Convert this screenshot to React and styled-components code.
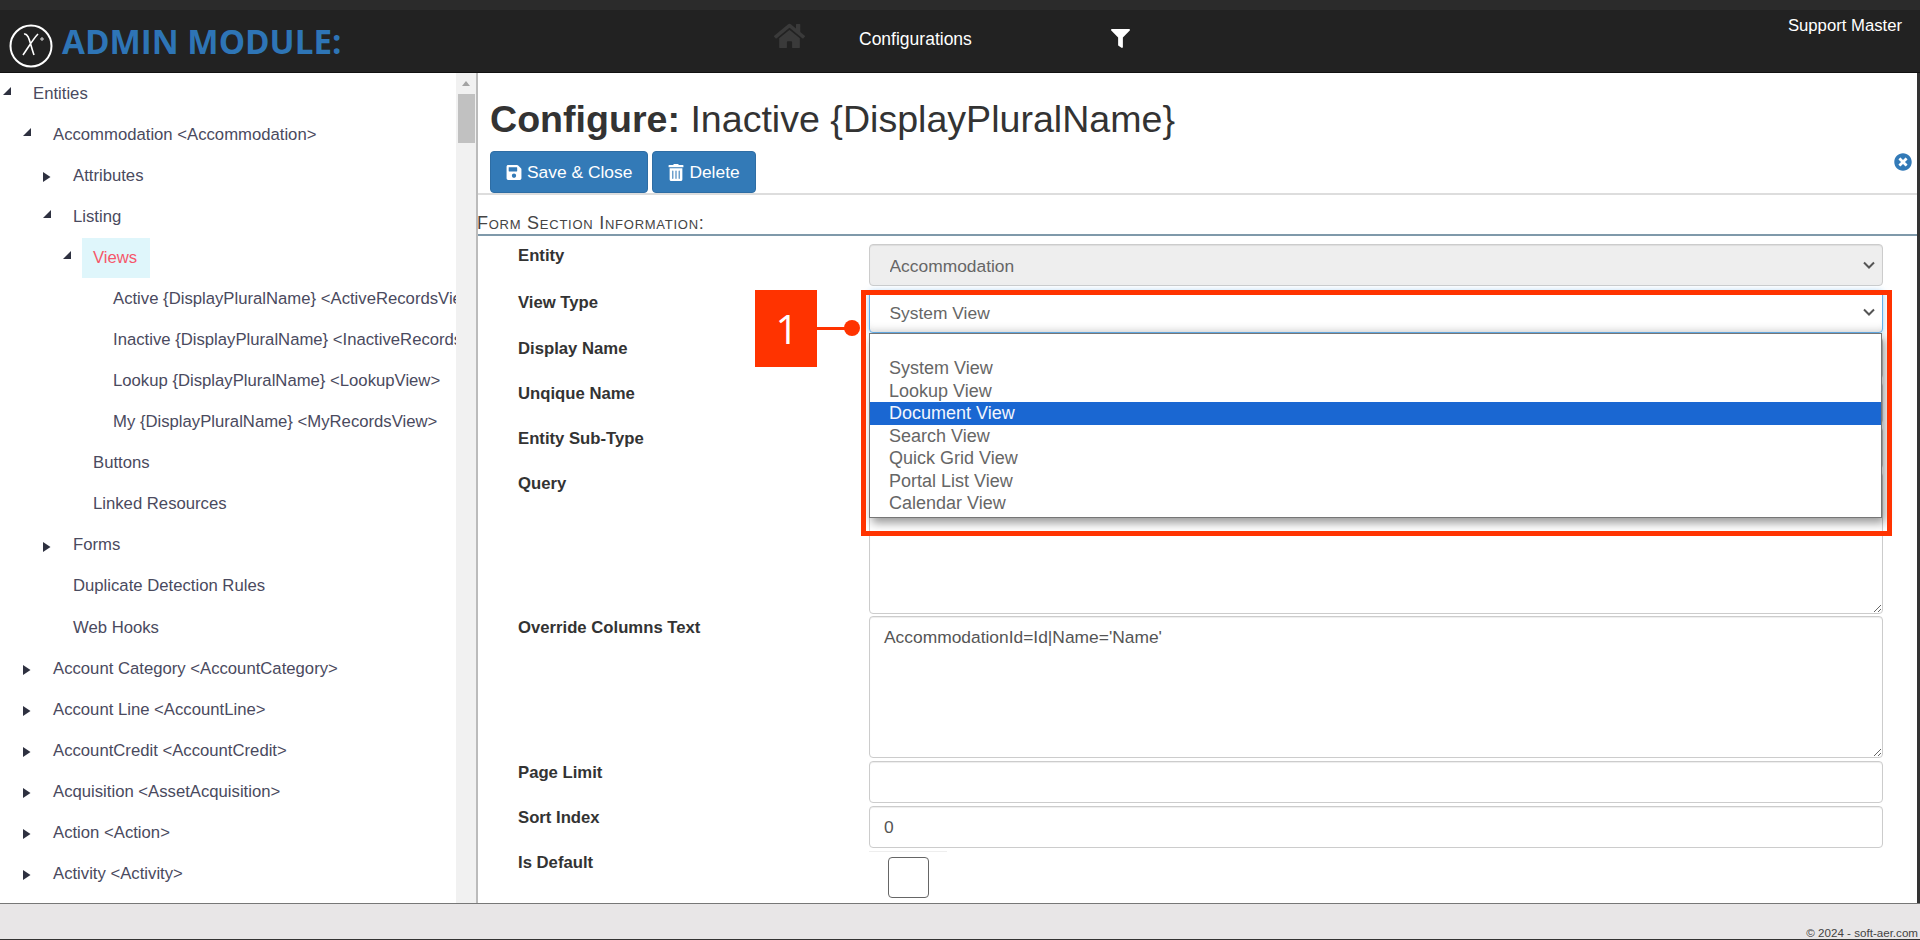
import React from 'react';
import styled, { createGlobalStyle } from 'styled-components';
import { FaFilter, FaHome, FaSave, FaTimesCircle, FaTrashAlt } from 'react-icons/fa';

const GlobalStyle = createGlobalStyle`
  html, body {
    margin: 0;
    height: 100%;
    overflow: hidden;
    background: #fff;
    font-family: "Liberation Sans", Arial, sans-serif;
  }
`;

const Page = styled.div`
  width: 1920px;
  height: 940px;
  display: flex;
  flex-direction: column;
  position: relative;
  overflow: hidden;
`;

const TopStrip = styled.div`
  height: 10px;
  background: #2b2b2b;
`;

const Header = styled.header`
  height: 62px;
  flex: none;
  display: flex;
  background: #222;
  border-bottom: 1px solid #111;
  color: #fff;
`;

const Brand = styled.div`
  width: 774px;
  flex: none;
  display: flex;
  align-items: center;
  gap: 9px;
  padding: 10px 0 0 9px;
  box-sizing: border-box;
`;

const BrandText = styled.span`
  font-family: "Open Sans", sans-serif;
  font-weight: 700;
  font-size: 33.2px;
  color: #2e75b6;
  white-space: nowrap;
  margin-bottom: 10px;
`;

const HomeIcon = styled(FaHome)`
  width: 31px;
  height: 28px;
  color: #3a3a3a;
  margin-top: 12px;
`;

const NavLink = styled.span`
  font-size: 17.5px;
  margin: 19px 0 0 54px;
  width: 252px;
`;

const FilterIcon = styled(FaFilter)`
  width: 19px;
  height: 19px;
  margin-top: 19px;
`;

const UserName = styled.span`
  margin-left: auto;
  padding: 6px 18px 0 0;
  font-size: 16.7px;
`;

const Body = styled.div`
  flex: 1;
  display: flex;
  min-height: 0;
`;

const Sidebar = styled.aside`
  width: 478px;
  flex: none;
  box-sizing: border-box;
  display: flex;
  border-right: 2px solid #bbb;
`;

const Tree = styled.ul`
  flex: 1;
  min-width: 0;
  list-style: none;
  margin: 0;
  padding: 0;
  overflow: hidden;
`;

const TreeRow = styled.li`
  height: 41.08px;
  display: flex;
  align-items: center;
  padding-left: ${(p) => p.$level * 20 + 33}px;
  position: relative;
  font-size: 16.7px;
  color: #4a4a5e;
  white-space: nowrap;
`;

const Toggle = styled.svg`
  position: absolute;
  left: ${(p) => p.$level * 20 + 2}px;
  top: ${(p) => (p.$open ? 13 : 17)}px;
  width: 10px;
  height: 10px;
  fill: #2e3140;
`;

const TreeLabel = styled.span`
  padding: ${(p) => (p.$active ? '10px 13px 10px 11px' : '0')};
  margin-left: ${(p) => (p.$active ? '-11px' : '0')};
  background: ${(p) => (p.$active ? '#dff6fb' : 'transparent')};
  color: ${(p) => (p.$active ? '#f6566a' : 'inherit')};
`;

const ScrollTrack = styled.div`
  width: 20px;
  flex: none;
  background: #f1f1f1;
  display: flex;
  flex-direction: column;
  align-items: center;
`;

const ScrollArrow = styled.div`
  margin-top: 8px;
  width: 0;
  height: 0;
  border-left: 4px solid transparent;
  border-right: 4px solid transparent;
  border-bottom: 5px solid #a3a3a3;
`;

const ScrollThumb = styled.div`
  width: 17px;
  height: 49px;
  margin-top: 8px;
  background: #c1c1c1;
`;

const Main = styled.main`
  flex: 1;
  min-width: 0;
  display: flex;
  flex-direction: column;
  border-right: 3px solid #333;
  overflow: hidden;
`;

const Title = styled.h1`
  margin: 0;
  padding: 26px 0 0 12px;
  height: 52px;
  font-size: 37.6px;
  line-height: 40px;
  font-weight: 400;
  color: #333;
  strong {
    font-weight: 700;
  }
`;

const Toolbar = styled.div`
  display: flex;
  align-items: flex-end;
  gap: 4px;
  height: 42px;
  padding-left: 12px;
  border-bottom: 2px solid #ddd;
  position: relative;
`;

const ActionButton = styled.button`
  height: 42px;
  display: flex;
  align-items: center;
  gap: 5px;
  padding: 0 15px;
  font: 17.4px "Liberation Sans", Arial, sans-serif;
  color: #fff;
  background: #337ab7;
  border: 1px solid #2e6da4;
  border-radius: 4px;
  svg {
    width: 16px;
    height: 17px;
  }
`;

const CloseIcon = styled(FaTimesCircle)`
  position: absolute;
  right: 5px;
  top: 2px;
  width: 18px;
  height: 18px;
  color: #337ab7;
`;

const SectionTitle = styled.div`
  height: 41px;
  box-sizing: border-box;
  padding-top: 18px;
  text-indent: -1px;
  font-size: 18px;
  letter-spacing: .75px;
  line-height: 20px;
  font-variant: small-caps;
  color: #444;
  border-bottom: 2px solid #7f99aa;
`;

const Form = styled.form`
  display: flex;
  flex-direction: column;
  padding: 8px 34px 0 40px;
`;

const FormRow = styled.div`
  display: grid;
  grid-template-columns: 351px 1fr;
  margin-bottom: ${(p) => p.$gap ?? 3}px;
`;

const Label = styled.label`
  font-size: 16.7px;
  font-weight: 700;
  line-height: 20px;
  color: #333;
  padding-top: 2px;
`;

const controlStyle = `
  width: 100%;
  box-sizing: border-box;
  border: 1px solid #ccc;
  border-radius: 4px;
  background: #fff;
  color: #555;
  font: 17.4px/22px "Liberation Sans", Arial, sans-serif;
  padding: 6px 14px;
  box-shadow: inset 0 1px 1px rgba(0, 0, 0, .075);
  outline: none;
  display: block;
`;

const chevron = "data:image/svg+xml,%3Csvg xmlns='http://www.w3.org/2000/svg' width='12' height='8'%3E%3Cpath d='M1 1.5l5 5 5-5' fill='none' stroke='%23555' stroke-width='2'/%3E%3C/svg%3E";

const Select = styled.select`
  ${controlStyle}
  height: 42px;
  padding: 7px 14px 5px 19.5px;
  appearance: none;
  color: #666;
  background: ${(p) => (p.disabled ? '#eee' : '#fff')} url("${chevron}") no-repeat right 7px center;
  opacity: 1;
  ${(p) => p.$focused && `
    border-color: #66afe9;
    box-shadow: inset 0 -10px 8px -8px rgba(0, 0, 0, .14), 0 0 6px rgba(102, 175, 233, .6);
  `}
`;

const Input = styled.input`
  ${controlStyle}
  height: 42px;
`;

const TextArea = styled.textarea`
  ${controlStyle}
  height: ${(p) => p.$height}px;
  padding-top: 9px;
  resize: vertical;
`;

const CheckboxCell = styled.div`
  width: 78px;
  height: 47px;
  padding-top: 5px;
  box-sizing: border-box;
  border-top: 1px solid #eee;
  display: flex;
  justify-content: center;
`;

const Checkbox = styled.div`
  width: 41px;
  height: 41px;
  box-sizing: border-box;
  border: 1px solid #666;
  border-radius: 4px;
  background: #fff;
`;

const Popup = styled.ul`
  position: absolute;
  left: 869px;
  top: 333px;
  width: 1013px;
  height: 185px;
  box-sizing: border-box;
  margin: 0;
  padding: 23px 0 0;
  list-style: none;
  background: #fff;
  border: 1px solid #767676;
  box-shadow: 3px 5px 9px rgba(0, 0, 0, .4);
  font-size: 18px;
  color: #666;
`;

const PopupOption = styled.li`
  height: 22.5px;
  line-height: 22.5px;
  padding-left: 19px;
  background: ${(p) => (p.$selected ? '#1a67d2' : 'transparent')};
  color: ${(p) => (p.$selected ? '#f2f6fd' : 'inherit')};
`;

const Callout = styled.div`
  position: absolute;
  left: 861px;
  top: 290px;
  width: 1031px;
  height: 246px;
  box-sizing: border-box;
  border: 5px solid #ff3300;
`;

const Badge = styled.div`
  position: absolute;
  left: 755px;
  top: 290px;
  width: 62px;
  height: 77px;
  padding-left: 2px;
  box-sizing: border-box;
  display: flex;
  align-items: center;
  justify-content: center;
  background: #ff3300;
  color: #fff;
  font: 40px "Open Sans", sans-serif;
`;

const Connector = styled.div`
  position: absolute;
  left: 817px;
  top: 327px;
  width: 30px;
  height: 3px;
  background: #ff3300;
  &::after {
    content: '';
    position: absolute;
    right: -13px;
    top: -7px;
    width: 16px;
    height: 16px;
    border-radius: 50%;
    background: #ff3300;
  }
`;

const Footer = styled.footer`
  height: 37px;
  flex: none;
  box-sizing: border-box;
  display: flex;
  align-items: flex-end;
  justify-content: flex-end;
  background: #e8e6e7;
  border-top: 1px solid #777;
  border-bottom: 1px solid #333;
  padding-right: 2px;
  font-size: 11.6px;
  line-height: 12px;
  color: #444;
`;

const treeItems = [
  { level: 0, label: 'Entities', toggle: 'open' },
  { level: 1, label: 'Accommodation <Accommodation>', toggle: 'open' },
  { level: 2, label: 'Attributes', toggle: 'closed' },
  { level: 2, label: 'Listing', toggle: 'open' },
  { level: 3, label: 'Views', toggle: 'open', active: true },
  { level: 4, label: 'Active {DisplayPluralName} <ActiveRecordsView>' },
  { level: 4, label: 'Inactive {DisplayPluralName} <InactiveRecordsView>' },
  { level: 4, label: 'Lookup {DisplayPluralName} <LookupView>' },
  { level: 4, label: 'My {DisplayPluralName} <MyRecordsView>' },
  { level: 3, label: 'Buttons' },
  { level: 3, label: 'Linked Resources' },
  { level: 2, label: 'Forms', toggle: 'closed' },
  { level: 2, label: 'Duplicate Detection Rules' },
  { level: 2, label: 'Web Hooks' },
  { level: 1, label: 'Account Category <AccountCategory>', toggle: 'closed' },
  { level: 1, label: 'Account Line <AccountLine>', toggle: 'closed' },
  { level: 1, label: 'AccountCredit <AccountCredit>', toggle: 'closed' },
  { level: 1, label: 'Acquisition <AssetAcquisition>', toggle: 'closed' },
  { level: 1, label: 'Action <Action>', toggle: 'closed' },
  { level: 1, label: 'Activity <Activity>', toggle: 'closed' },
];

const viewTypes = [
  'System View',
  'Lookup View',
  'Document View',
  'Search View',
  'Quick Grid View',
  'Portal List View',
  'Calendar View',
];

const Logo = () => (
  <svg width="44" height="44" viewBox="0 0 44 44">
    <circle cx="22" cy="22" r="20.5" fill="none" stroke="#fff" strokeWidth="2" />
    <path d="M15 10 C20 9 21 20 25 31 M29 10 C24 15 19 24 14 31" fill="none" stroke="#fff" strokeWidth="1.6" />
    <path d="M31 15 h4 M33 13 v4" stroke="#ddd" strokeWidth="1" />
  </svg>
);

const TreeItem = ({ level, label, toggle, active }) => (
  <TreeRow $level={level}>
    {toggle === 'open' && (
      <Toggle $level={level} $open viewBox="0 0 10 10"><polygon points="9,1 9,9 1,9" /></Toggle>
    )}
    {toggle === 'closed' && (
      <Toggle $level={level} viewBox="0 0 10 10"><polygon points="1,0 8.5,5 1,10" /></Toggle>
    )}
    <TreeLabel $active={active}>{label}</TreeLabel>
  </TreeRow>
);

export default function App() {
  return (
    <Page>
      <GlobalStyle />
      <TopStrip />
      <Header>
        <Brand>
          <Logo />
          <BrandText>ADMIN MODULE:</BrandText>
        </Brand>
        <HomeIcon />
        <NavLink>Configurations</NavLink>
        <FilterIcon />
        <UserName>Support Master</UserName>
      </Header>
      <Body>
        <Sidebar>
          <Tree>
            {treeItems.map((item) => <TreeItem key={item.label} {...item} />)}
          </Tree>
          <ScrollTrack>
            <ScrollArrow />
            <ScrollThumb />
          </ScrollTrack>
        </Sidebar>
        <Main>
          <Title><strong>Configure:</strong> Inactive {'{DisplayPluralName}'}</Title>
          <Toolbar>
            <ActionButton type="button"><FaSave />Save &amp; Close</ActionButton>
            <ActionButton type="button"><FaTrashAlt />Delete</ActionButton>
            <CloseIcon />
          </Toolbar>
          <SectionTitle>Form Section Information:</SectionTitle>
          <Form>
            <FormRow $gap={5}>
              <Label>Entity</Label>
              <Select disabled defaultValue="Accommodation"><option>Accommodation</option></Select>
            </FormRow>
            <FormRow $gap={4}>
              <Label>View Type</Label>
              <Select $focused defaultValue="System View">
                {viewTypes.map((v) => <option key={v}>{v}</option>)}
              </Select>
            </FormRow>
            <FormRow>
              <Label>Display Name</Label>
              <Input readOnly />
            </FormRow>
            <FormRow>
              <Label>Unqique Name</Label>
              <Input readOnly />
            </FormRow>
            <FormRow>
              <Label>Entity Sub-Type</Label>
              <Input readOnly />
            </FormRow>
            <FormRow $gap={2}>
              <Label>Query</Label>
              <TextArea $height={142} readOnly />
            </FormRow>
            <FormRow>
              <Label>Override Columns Text</Label>
              <TextArea $height={142} readOnly value="AccommodationId=Id|Name='Name'" />
            </FormRow>
            <FormRow>
              <Label>Page Limit</Label>
              <Input readOnly />
            </FormRow>
            <FormRow>
              <Label>Sort Index</Label>
              <Input readOnly value="0" />
            </FormRow>
            <FormRow>
              <Label>Is Default</Label>
              <CheckboxCell><Checkbox /></CheckboxCell>
            </FormRow>
          </Form>
        </Main>
      </Body>
      <Footer>© 2024 - soft-aer.com</Footer>
      <Popup>
        {viewTypes.map((v) => <PopupOption key={v} $selected={v === 'Document View'}>{v}</PopupOption>)}
      </Popup>
      <Callout />
      <Badge>1</Badge>
      <Connector />
    </Page>
  );
}
